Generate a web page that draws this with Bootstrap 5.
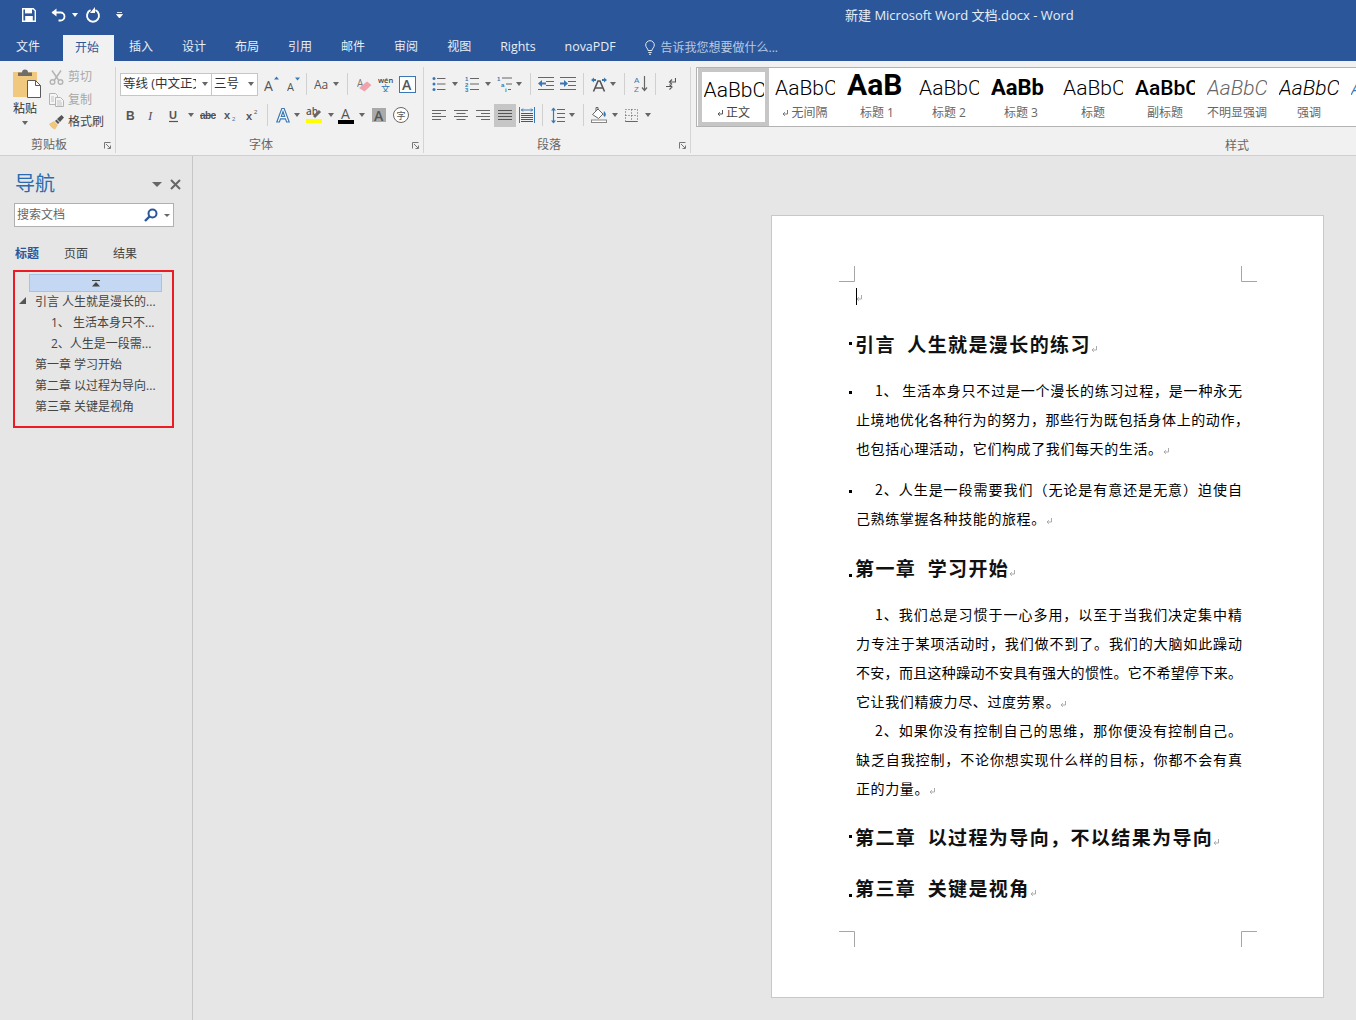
<!DOCTYPE html>
<html lang="zh-CN">
<head>
<meta charset="utf-8">
<title>Word</title>
<link href="https://cdn.jsdelivr.net/npm/bootstrap@5.3.0/dist/css/bootstrap.min.css" rel="stylesheet">
<style>
html,body{height:100%;margin:0}
body{width:1356px;height:1020px;overflow:hidden;background:#e6e6e6;font-family:"Open Sans","Noto Sans CJK SC",sans-serif;font-size:12px;color:#444}
svg{display:block;flex:none}
.s1{margin-left:1px}.s3{margin-left:3px}.s4{margin-left:4px}.s5{margin-left:5px}.s6{margin-left:6px}.s7{margin-left:7px}.s8{margin-left:8px}.s9{margin-left:9px}.s10{margin-left:10px}.s11{margin-left:11px}.s12{margin-left:12px}.s15{margin-left:15px}.s22{margin-left:22px}
.tbar{height:34px;background:#2b579a;color:#e9eef6;padding-bottom:4px}
.wtitle{margin-left:721px;font-size:13px;line-height:30px;white-space:nowrap}
.tabrow{height:27px;background:#2b579a;padding-left:16px}
.tabrow .nav-link{padding:0;margin:0 0 0 29px;color:#e9eef6;font-size:12px;line-height:26px;height:26px;white-space:nowrap}
.tabrow .tfile{margin-left:0;margin-right:1px}
.tabrow .nav-link.tact{background:#f1f1f1;color:#2b579a;padding:0 15px 0 12px;margin:1px -14px 0 22px;height:26px}
.tabrow .nav-link.tlat{font-size:12.4px}
.tabrow .tell{color:#b9c9e2;margin-left:6px}
.tq{margin-left:29px}
.rib{height:95px;background:#f1f1f1;border-bottom:1px solid #cfcfcf}
.grp{flex:none;border-right:1px solid #d4d4d4;margin-top:6px;height:86px;padding-top:5px}
.g1{width:116px}.g2{width:308px;padding-left:4px}.g3{width:267px;padding-left:4px}.g4{flex:1 1 0;min-width:0;border-right:0;padding-left:5px;padding-top:0;overflow:hidden}
.rrow{height:24px;display:flex;align-items:center}
.rrow+.rrow{margin-top:7px}
.glab{height:18px;margin-top:9px;line-height:18px;color:#666;white-space:nowrap;display:flex;align-items:center;padding-right:4px}
.glab.gc{margin-top:2px}
.glab.gy{margin-top:10px}
.lb1{margin-left:31px}.lb2{margin-left:129px}.lb3{margin-left:109px}.lb4{margin-left:529px}
.laun{margin-left:auto}
.tri{flex:none;width:0;height:0;border:3.5px solid transparent;border-top:4px solid #666;border-bottom:0}
.tri.tw{border-top-color:#fff}
.tri.tl{border-width:5px 5px 0;border-top-color:#666}
.tri.ts{border-width:3px 3px 0}
.vs{flex:none;width:1px;height:22px;background:#d0d0d0}
.combo{flex:none;height:23px;background:#fff;border:1px solid #c6c6c6;display:flex;align-items:center;padding-left:2px;color:#333;font-size:12.5px;white-space:nowrap;overflow:hidden}
.cf{width:92px}.cs{width:47px;margin-left:-1px}
.cf span{width:73px;margin-right:5px;overflow:hidden;flex:none}.cs span{width:33px;flex:none}
.pst{width:49px;flex:none;padding-left:13px;margin-top:-3px}
.pst .lbl{color:#333;font-size:12px;line-height:15px;margin-top:2px}
.pst .tri{margin:5px 0 0 9px}
.ccol{margin-top:-3px}
.crow{height:16px;display:flex;align-items:center;gap:4px;margin-bottom:6.5px;line-height:16px;white-space:nowrap}
.off{color:#a8a8a8}
.gal{height:60px;background:#fff;border:1px solid #b3b3b3;border-right:0;overflow:hidden;padding-left:1px}
.sty{flex:none;width:72px;height:58px;text-align:center;overflow:hidden}
.sty.on{border:4px solid #c6c6c6;width:71px;height:58px}
.smp{height:36px;width:60px;margin:0 auto;overflow:hidden;white-space:nowrap;font-family:Roboto,sans-serif;font-size:21px;font-weight:300;color:#000;line-height:40px;text-align:left}
.on .smp{width:60px;height:32px;line-height:36px}
.smp.h1x{font-weight:700;font-size:30px;line-height:34px}
.smp.h3x{font-weight:700;font-size:22px}
.smp.med{font-weight:500}
.smp.itl{font-style:italic;color:#666}
.smp.itd{font-style:italic}
.smp.itb{font-style:italic;color:#3a78b5}
.sl{color:#666;line-height:16px;margin-top:1px;white-space:nowrap;display:flex;align-items:center;justify-content:center;gap:2px}
.on .sl{color:#444}
.main{height:864px}
.navp{width:193px;height:864px;flex:none;border-right:1px solid #c6c6c6;padding-top:14px;background:#e6e6e6}
.ntop{padding-left:15px;height:28px;display:flex;align-items:center}
.ntop b{font-weight:400;font-size:20px;color:#2b6cb0;line-height:26px;width:137px}
.nsearch{margin:5px 0 0 14px;width:160px;height:24px;background:#fff;border:1px solid #b0b0b0;display:flex;align-items:center;padding-left:2px;color:#666}
.nsearch span{width:127px}
.ntabs{margin:15px 0 0 15px;height:24px;line-height:24px}
.ntabs span{width:49px;color:#444}
.ntabs .cur{color:#2b579a;font-weight:700}
.redb{margin:4px 0 0 13px;width:161px;height:158px;border:2px solid #ed1c24;padding-top:2px}
.tbtn{margin-left:14px;margin-bottom:-1px;width:133px;height:18px;background:#c5d8f3;border:1px solid #a8c2e6;display:flex;align-items:center;justify-content:center}
.ti{height:21px;line-height:21px;padding-left:20px;position:relative;white-space:nowrap;color:#444}
.ti.l2{padding-left:36px}
.tarrow{position:absolute;left:4px;top:6px}
.docw{flex:1 1 0;padding:59px 0 0 578px}
.paper{position:relative;width:553px;height:783px;background:#fff;border:1px solid #c8c8c8;padding:65px 0 0 84px;font-family:"Noto Sans CJK SC",sans-serif;color:#000}
.mk{position:absolute}
.mtl{left:67px;top:50px}.mtr{left:469px;top:50px}.mbl{left:67px;top:715px}.mbr{left:469px;top:715px}
.ln{height:29px;line-height:29px;font-size:14px;white-space:nowrap;letter-spacing:.6px}
.jl,.jw{white-space:normal;letter-spacing:0;text-align:justify;text-align-last:justify;width:386px}
.jw{width:393px}
.ind{padding-left:19px}
.hd{height:29px;line-height:29px;font-size:19px;font-weight:700;letter-spacing:1.4px;white-space:nowrap;color:#111;margin-left:-1px}
.mt12{margin-top:12px}.mt18{margin-top:18px}.mt19{margin-top:19px}.mt20{margin-top:20px}.mt22{margin-top:22px}
.dot{display:inline-block;width:3px;height:3px;background:#000;margin-left:-7px;margin-right:4px;vertical-align:middle}
.hd .dot{margin-left:-6px;margin-right:3px}
.dlo{vertical-align:-1px}.dhi{vertical-align:7px}
svg.pm{display:inline-block;vertical-align:-1px;margin-left:0}
svg.pc{margin-left:-1px}
.crt{display:inline-block;width:1px;height:17px;background:#000;vertical-align:-4px}
</style>
</head>
<body>
<div class="tbar d-flex align-items-center">
  <svg class="s22" width="14" height="14" viewBox="0 0 14 14"><path d="M.7.7h10.600l2 2v10.600H.7z" fill="none" stroke="#fff" stroke-width="1.4"/><rect x="3" y="1" width="7" height="4.4" fill="#fff"/><rect x="3.2" y="8" width="7.6" height="5" fill="#fff"/></svg>
  <svg class="s15" width="18" height="14" viewBox="0 0 18 14"><path d="M1.500 4.500h8a4 4 0 0 1 0 8h-2" fill="none" stroke="#fff" stroke-width="1.800"/><path d="M5.500.5v8l-5-4z" fill="#fff"/></svg>
  <div class="tri tw s3"></div>
  <svg class="s7" width="16" height="16" viewBox="0 0 16 16"><path d="M5.600 3.200a6 6 0 1 0 4.800 0" fill="none" stroke="#fff" stroke-width="1.900"/><path d="M10 0v6H5z" fill="#fff"/></svg>
  <svg class="s15" width="8" height="8" viewBox="0 0 8 8"><path d="M1 1.500h5M.5 3.500h6l-3 3.500z" fill="#fff" stroke="#fff" stroke-width=".8"/></svg>
  <div class="wtitle">新建 Microsoft Word 文档.docx - Word</div>
</div>
<ul class="nav tabrow flex-nowrap">
  <li class="nav-item"><a class="nav-link tfile" href="#">文件</a></li>
  <li class="nav-item"><a class="nav-link tact" href="#">开始</a></li>
  <li class="nav-item"><a class="nav-link" href="#">插入</a></li>
  <li class="nav-item"><a class="nav-link" href="#">设计</a></li>
  <li class="nav-item"><a class="nav-link" href="#">布局</a></li>
  <li class="nav-item"><a class="nav-link" href="#">引用</a></li>
  <li class="nav-item"><a class="nav-link" href="#">邮件</a></li>
  <li class="nav-item"><a class="nav-link" href="#">审阅</a></li>
  <li class="nav-item"><a class="nav-link" href="#">视图</a></li>
  <li class="nav-item"><a class="nav-link tlat" href="#">Rights</a></li>
  <li class="nav-item"><a class="nav-link tlat" href="#">novaPDF</a></li>
  <li class="nav-item d-flex align-items-center tq"><svg width="10" height="15" viewBox="0 0 10 15"><path d="M3 10.500C3 8.500.7 7.500.7 5a4.300 4.300 0 0 1 8.600 0c0 2.500-2.300 3.500-2.300 5.500zM3.300 12.500h3.400M4 14.300h2" fill="none" stroke="#dfe7f3" stroke-width="1"/></svg><a class="nav-link tell" href="#">告诉我您想要做什么...</a></li>
</ul>
<div class="rib d-flex">
  <!-- clipboard -->
  <div class="grp g1">
    <div class="d-flex" style="height:62px">
      <div class="pst">
        <svg width="28" height="30" viewBox="0 0 28 30"><rect x="0" y="3" width="24" height="25" fill="#f0c97f"/><path d="M5 7V3.500h4a3 3 0 0 1 6 0h4V7z" fill="#6d6d6d"/><path d="M14.500 11.500h8l5 5v12h-13z" fill="#fff" stroke="#5a5a5a"/><path d="M22.500 11.500v5h5" fill="none" stroke="#5a5a5a"/></svg>
        <div class="lbl">粘贴</div>
        <div class="tri"></div>
      </div>
      <div class="ccol">
        <div class="crow off"><svg width="15" height="15" viewBox="0 0 15 15"><path d="M3 .5l6.500 9.500M12 .5L5.500 10" fill="none" stroke="#b4b4b4" stroke-width="1.500"/><circle cx="3.500" cy="12" r="2.300" fill="none" stroke="#b4b4b4" stroke-width="1.400"/><circle cx="11.500" cy="12" r="2.300" fill="none" stroke="#b4b4b4" stroke-width="1.400"/></svg>剪切</div>
        <div class="crow off"><svg width="15" height="14" viewBox="0 0 15 14"><path d="M.5.500h6l2 2v9h-8z" fill="#f5f5f5" stroke="#b4b4b4"/><path d="M6.500 4.500h5l3 3v6h-8z" fill="#f5f5f5" stroke="#b4b4b4"/><path d="M2 4h3M2 6h3M2 8h3M8 8h4M8 10h5M8 12h5" stroke="#c4c4c4"/></svg>复制</div>
        <div class="crow"><svg width="15" height="15" viewBox="0 0 15 15"><path d="M0 9l5-3 4 4-3 4.500C4 14 1.500 12 0 9z" fill="#efc77e"/><path d="M6 6l1.500-1.500 3 3L9 9zM8 4l4.500-4 2.500 2.500L11 7z" fill="#555"/></svg>格式刷</div>
      </div>
    </div>
    <div class="glab gc"><span class="lb1">剪贴板</span><svg class="laun" width="7" height="7" viewBox="0 0 7 7"><path d="M.5 6.500V.5h6M2 2l4 4M3.500 6.500h3v-3" fill="none" stroke="#777"/></svg></div>
  </div>
  <!-- font -->
  <div class="grp g2">
    <div class="rrow">
      <div class="combo cf"><span>等线 (中文正文)</span><div class="tri s1"></div></div>
      <div class="combo cs"><span>三号</span><div class="tri s1"></div></div>
      <svg class="s6" width="16" height="16" viewBox="0 0 16 16"><text x="0" y="15" font-family="Open Sans" font-size="14" fill="#555">A</text><path d="M10 3.500l2.500-3 2.500 3z" fill="#3a78b5"/></svg>
      <svg class="s7" width="14" height="15" viewBox="0 0 14 15"><text x="0" y="14" font-family="Open Sans" font-size="11" fill="#555">A</text><path d="M8 .5h5l-2.500 3z" fill="#3a78b5"/></svg>
      <div class="vs s5"></div>
      <svg class="s7" width="16" height="14" viewBox="0 0 16 14"><text x="0" y="12" font-family="Open Sans" font-size="12" fill="#555">Aa</text></svg>
      <div class="tri s3"></div>
      <div class="vs s8"></div>
      <svg class="s9" width="15" height="15" viewBox="0 0 15 15"><text x="0" y="10" font-family="Open Sans" font-size="10" fill="#777">A</text><path d="M2 11l8-6.500 4.500 3.500-7 6.500z" fill="#f1a3ad"/></svg>
      <svg class="s6" width="16" height="16" viewBox="0 0 16 16"><text x="0" y="7" font-family="Open Sans" font-size="7.500" fill="#444" font-weight="600">wén</text><text x="3" y="16" font-family="Noto Sans CJK SC" font-size="9" fill="#2e75b6">文</text></svg>
      <svg class="s5" width="17" height="17" viewBox="0 0 17 17"><rect x=".5" y=".5" width="16" height="16" fill="#fff" stroke="#3a78b5"/><text x="3" y="13.500" font-family="Open Sans" font-size="14" font-weight="600" fill="#555">A</text></svg>
    </div>
    <div class="rrow">
      <svg class="s5" width="10" height="14" viewBox="0 0 10 14"><text x="1" y="12" font-family="Liberation Sans" font-size="12" font-weight="700" fill="#555">B</text></svg>
      <svg class="s12" width="10" height="14" viewBox="0 0 10 14"><text x="1" y="12" font-family="Liberation Serif" font-size="13" font-style="italic" fill="#555">I</text></svg>
      <svg class="s11" width="11" height="15" viewBox="0 0 11 15"><text x="1" y="11" font-family="Liberation Sans" font-size="11" font-weight="700" fill="#555">U</text><path d="M1 13.500h9" stroke="#555" stroke-width="1.200"/></svg>
      <div class="tri s9"></div>
      <svg class="s6" width="16" height="14" viewBox="0 0 16 14"><text x="0" y="11" font-family="Liberation Sans" font-size="10" fill="#555" font-weight="700" textLength="16">abc</text><path d="M0 7.500h16" stroke="#555"/></svg>
      <svg class="s8" width="13" height="14" viewBox="0 0 13 14"><text x="0" y="11" font-family="Liberation Sans" font-size="11" font-weight="700" fill="#555">x</text><text x="8" y="13" font-family="Liberation Sans" font-size="6" fill="#3a78b5">2</text></svg>
      <svg class="s9" width="13" height="14" viewBox="0 0 13 14"><text x="0" y="12" font-family="Liberation Sans" font-size="11" font-weight="700" fill="#555">x</text><text x="8" y="6" font-family="Liberation Sans" font-size="6" fill="#555">2</text></svg>
      <div class="vs s8"></div>
      <svg class="s8" width="14" height="16" viewBox="0 0 14 16"><path d="M.8 15L5.800 1.500h2.400L13.200 15h-2.600l-1.100-3.200H4.500L3.400 15zM5.300 9.500h3.400L7 4.500z" fill="#fff" stroke="#3a78b5" stroke-width="1.200"/></svg>
      <div class="tri s4"></div>
      <svg class="s6" width="16" height="18" viewBox="0 0 16 18"><text x="0" y="9" font-family="Open Sans" font-size="10" font-weight="600" fill="#555">ab</text><path d="M8 11l6-6" stroke="#666" stroke-width="3"/><rect y="13" width="16" height="4" fill="#ff0"/></svg>
      <div class="tri s6"></div>
      <svg class="s4" width="16" height="18" viewBox="0 0 16 18"><text x="3" y="13" font-family="Open Sans" font-size="14" fill="#555">A</text><rect y="14" width="16" height="4" fill="#000"/></svg>
      <div class="tri s5"></div>
      <svg class="s7" width="14" height="14" viewBox="0 0 14 14"><rect width="14" height="14" fill="#aaa"/><text x="2" y="12.500" font-family="Open Sans" font-size="14" font-weight="600" fill="#555">A</text></svg>
      <svg class="s7" width="16" height="16" viewBox="0 0 16 16"><circle cx="8" cy="8" r="7.500" fill="#fff" stroke="#666"/><text x="3.500" y="12" font-family="Noto Sans CJK SC" font-size="9" fill="#555">字</text></svg>
    </div>
    <div class="glab"><span class="lb2">字体</span><svg class="laun" width="7" height="7" viewBox="0 0 7 7"><path d="M.5 6.500V.5h6M2 2l4 4M3.500 6.500h3v-3" fill="none" stroke="#777"/></svg></div>
  </div>
  <!-- paragraph -->
  <div class="grp g3">
    <div class="rrow">
      <svg class="s4" width="14" height="14" viewBox="0 0 14 14"><path d="M5 1.500h8.500M5 7h8.500M5 12.500h8.500" stroke="#666"/><circle cx="2" cy="1.500" r="1.500" fill="#3a78b5"/><circle cx="2" cy="7" r="1.500" fill="#3a78b5"/><circle cx="2" cy="12.500" r="1.500" fill="#3a78b5"/></svg>
      <div class="tri s6"></div>
      <svg class="s7" width="14" height="16" viewBox="0 0 14 16"><path d="M5 2.500h9M5 8h9M5 13.500h9" stroke="#666"/><text x="0" y="5" font-family="Liberation Sans" font-size="6" font-weight="700" fill="#3a78b5">1</text><text x="0" y="10.500" font-family="Liberation Sans" font-size="6" font-weight="700" fill="#3a78b5">2</text><text x="0" y="16" font-family="Liberation Sans" font-size="6" font-weight="700" fill="#3a78b5">3</text></svg>
      <div class="tri s6"></div>
      <svg class="s6" width="16" height="16" viewBox="0 0 16 16"><path d="M5 2h10M9 8h6M11 13.500h3" stroke="#666"/><text x="0" y="5" font-family="Liberation Sans" font-size="6" font-weight="700" fill="#3a78b5">1</text><text x="4" y="10.500" font-family="Liberation Sans" font-size="6" font-weight="700" fill="#3a78b5">a</text><text x="8" y="16" font-family="Liberation Sans" font-size="6" font-weight="700" fill="#3a78b5">i</text></svg>
      <div class="tri s3"></div>
      <div class="vs s8"></div>
      <svg class="s7" width="16" height="14" viewBox="0 0 16 14"><path d="M0 .5h16M8 4.500h8M8 8.500h8M0 12.500h16" stroke="#666"/><path d="M0 6.500L4 3v2.500h4v2H4V10z" fill="#3a78b5"/></svg>
      <svg class="s6" width="16" height="14" viewBox="0 0 16 14"><path d="M0 .5h16M8 4.500h8M8 8.500h8M0 12.500h16" stroke="#666"/><path d="M8 6.500L4 3v2.500H0v2h4V10z" fill="#3a78b5"/></svg>
      <div class="vs s7"></div>
      <svg class="s7" width="16" height="15" viewBox="0 0 16 15"><path d="M2.500 14.500L7 4h2l4.500 10.500M4.500 11h7" fill="none" stroke="#555" stroke-width="1.600"/><path d="M0 3l3-2.500v1.500h2v2H3v1.500zM16 3l-3-2.500v1.500h-2v2h2v1.500z" fill="#3a78b5"/></svg>
      <div class="tri s3"></div>
      <div class="vs s8"></div>
      <svg class="s9" width="14" height="16" viewBox="0 0 14 16"><text x="0" y="7" font-family="Liberation Sans" font-size="8" fill="#3a78b5">A</text><text x="0" y="15.500" font-family="Liberation Sans" font-size="8" fill="#8a5db0">Z</text><path d="M10.500 0v14M8 11.500l2.500 3 2.500-3" fill="none" stroke="#666" stroke-width="1.200"/></svg>
      <div class="vs s7"></div>
      <svg class="s10" width="10" height="14" viewBox="0 0 10 14"><path d="M9.500 1v4h-5M6 2.500L3.500 5 6 7.500M0 9.500h5M3.500 7.500L6 10l-2.500 2.500" fill="none" stroke="#555" stroke-width="1.100"/></svg>
    </div>
    <div class="rrow">
      <svg class="s4" width="14" height="11" viewBox="0 0 14 11"><path d="M0 .5h14M0 3.500h9M0 6.500h14M0 9.500h9" stroke="#666"/></svg>
      <svg class="s8" width="14" height="11" viewBox="0 0 14 11"><path d="M0 .5h14M2.500 3.500h9M0 6.500h14M2.500 9.500h9" stroke="#666"/></svg>
      <svg class="s8" width="14" height="11" viewBox="0 0 14 11"><path d="M0 .5h14M5 3.500h9M0 6.500h14M5 9.500h9" stroke="#666"/></svg>
      <svg class="s4" width="22" height="23" viewBox="0 0 22 23"><rect width="22" height="23" fill="#c6c6c6"/><path d="M4 6.500h14M4 9.500h14M4 12.500h14M4 15.500h14" stroke="#555"/></svg>
      <svg class="s3" width="16" height="16" viewBox="0 0 16 16"><path d="M.5 0v16M15.500 0v16" stroke="#3a78b5"/><path d="M2 3h12M4 1.500L2.500 3 4 4.500M12 1.500L13.500 3 12 4.500" fill="none" stroke="#3a78b5"/><path d="M2 6.500h12M2 8.500h12M2 10.500h12M2 12.500h12M2 14.500h12" stroke="#555"/></svg>
      <div class="vs s7"></div>
      <svg class="s8" width="14" height="17" viewBox="0 0 14 17"><path d="M6 2.500h8M6 6.500h8M6 10.500h8M6 14.500h8" stroke="#666"/><path d="M2.500 1v15" stroke="#3a78b5" stroke-width="1.200"/><path d="M0 3.500L2.500.5 5 3.500zM0 13.500h5L2.500 16.500z" fill="#3a78b5"/></svg>
      <div class="tri s4"></div>
      <div class="vs s8"></div>
      <svg class="s7" width="16" height="16" viewBox="0 0 16 16"><path d="M1.500 7.500L7 2l5 5-4.500 4.500z" fill="#fff" stroke="#666"/><path d="M5 4V.5h2V3" fill="none" stroke="#666"/><path d="M13 4c1.500 2 2.500 3 1.500 5s-2.500-.5-2-2z" fill="#3a78b5"/><rect x=".5" y="13" width="15" height="2.500" fill="#fff" stroke="#888"/></svg>
      <div class="tri s5"></div>
      <svg class="s7" width="13" height="13" viewBox="0 0 13 13"><path d="M.5.5h12v12H.5zM6.500.5v12M.5 6.500h12" fill="none" stroke="#555" stroke-dasharray="1 2"/><path d="M.5 12.500h12" stroke="#666"/></svg>
      <div class="tri s7"></div>
    </div>
    <div class="glab"><span class="lb3">段落</span><svg class="laun" width="7" height="7" viewBox="0 0 7 7"><path d="M.5 6.500V.5h6M2 2l4 4M3.500 6.500h3v-3" fill="none" stroke="#777"/></svg></div>
  </div>
  <!-- styles -->
  <div class="grp g4">
    <div class="gal d-flex">
      <div class="sty on"><div class="smp">AaBbC</div><div class="sl"><svg width="7" height="8" viewBox="0 0 7 8"><path d="M5.500 1v4H1M2.800 3.200L1 5l1.800 1.800" fill="none" stroke="#555"/></svg>正文</div></div>
      <div class="sty"><div class="smp">AaBbC</div><div class="sl"><svg width="7" height="8" viewBox="0 0 7 8"><path d="M5.500 1v4H1M2.800 3.200L1 5l1.800 1.800" fill="none" stroke="#777"/></svg>无间隔</div></div>
      <div class="sty"><div class="smp h1x">AaB</div><div class="sl">标题 1</div></div>
      <div class="sty"><div class="smp">AaBbC</div><div class="sl">标题 2</div></div>
      <div class="sty"><div class="smp h3x">AaBb</div><div class="sl">标题 3</div></div>
      <div class="sty"><div class="smp">AaBbC</div><div class="sl">标题</div></div>
      <div class="sty"><div class="smp med">AaBbC</div><div class="sl">副标题</div></div>
      <div class="sty"><div class="smp itl">AaBbC</div><div class="sl">不明显强调</div></div>
      <div class="sty"><div class="smp itd">AaBbC</div><div class="sl">强调</div></div>
      <div class="sty"><div class="smp itb">A</div></div>
    </div>
    <div class="glab gy"><span class="lb4">样式</span></div>
  </div>
</div>
<div class="main d-flex">
  <div class="navp">
    <div class="ntop"><b>导航</b><div class="tri tl"></div><svg class="s8" width="11" height="11" viewBox="0 0 11 11"><path d="M1 1l9 9M10 1l-9 9" stroke="#666" stroke-width="2"/></svg></div>
    <div class="nsearch"><span>搜索文档</span><svg width="14" height="14" viewBox="0 0 14 14"><circle cx="8.500" cy="5.500" r="4" fill="none" stroke="#2b579a" stroke-width="2"/><path d="M5.500 8.500L1 13" stroke="#2b579a" stroke-width="2.400"/></svg><div class="tri ts s6"></div></div>
    <div class="ntabs d-flex"><span class="cur">标题</span><span>页面</span><span>结果</span></div>
    <div class="redb">
      <div class="tbtn"><svg width="8" height="7" viewBox="0 0 8 7"><path d="M0 .5h8" stroke="#444"/><path d="M0 6.500L4 2l4 4.500z" fill="#444"/></svg></div>
      <div class="ti"><svg class="tarrow" width="7" height="7" viewBox="0 0 7 7"><path d="M7 0v7H0z" fill="#555"/></svg>引言 人生就是漫长的...</div>
      <div class="ti l2">1、&nbsp;生活本身只不...</div>
      <div class="ti l2">2、人生是一段需...</div>
      <div class="ti">第一章 学习开始</div>
      <div class="ti">第二章 以过程为导向...</div>
      <div class="ti">第三章 关键是视角</div>
    </div>
  </div>
  <div class="docw">
    <div class="paper">
      <svg class="mk mtl" width="16" height="16" viewBox="0 0 16 16"><path d="M15.500 0v15.500H0" fill="none" stroke="#a6a6a6"/></svg>
      <svg class="mk mtr" width="16" height="16" viewBox="0 0 16 16"><path d="M.5 0v15.500H16" fill="none" stroke="#a6a6a6"/></svg>
      <svg class="mk mbl" width="16" height="16" viewBox="0 0 16 16"><path d="M15.500 16V.5H0" fill="none" stroke="#a6a6a6"/></svg>
      <svg class="mk mbr" width="16" height="16" viewBox="0 0 16 16"><path d="M.5 16V.5H16" fill="none" stroke="#a6a6a6"/></svg>

      <div class="ln"><span class="crt"></span><svg class="pm pc" width="7" height="8" viewBox="0 0 7 8"><path d="M5.500 1v4H1M2.800 3.200L1 5l1.800 1.800" fill="none" stroke="#aaa"/></svg></div>
      <div class="hd mt19"><span class="dot dhi"></span>引言&nbsp;&nbsp;人生就是漫长的练习<svg class="pm" width="7" height="8" viewBox="0 0 7 8"><path d="M5.500 1v4H1M2.800 3.200L1 5l1.800 1.800" fill="none" stroke="#aaa"/></svg></div>
      <div class="ln mt18 jl"><span class="dot"></span><span class="ind"></span>1、 生活本身只不过是一个漫长的练习过程，是一种永无</div>
      <div class="ln jw">止境地优化各种行为的努力，那些行为既包括身体上的动作，</div>
      <div class="ln">也包括心理活动，它们构成了我们每天的生活。<svg class="pm" width="7" height="8" viewBox="0 0 7 8"><path d="M5.500 1v4H1M2.800 3.200L1 5l1.800 1.800" fill="none" stroke="#aaa"/></svg></div>
      <div class="ln mt12 jl"><span class="dot"></span><span class="ind"></span>2、人生是一段需要我们（无论是有意还是无意）迫使自</div>
      <div class="ln">己熟练掌握各种技能的旅程。<svg class="pm" width="7" height="8" viewBox="0 0 7 8"><path d="M5.500 1v4H1M2.800 3.200L1 5l1.800 1.800" fill="none" stroke="#aaa"/></svg></div>
      <div class="hd mt20"><span class="dot dlo"></span>第一章&nbsp;&nbsp;学习开始<svg class="pm" width="7" height="8" viewBox="0 0 7 8"><path d="M5.500 1v4H1M2.800 3.200L1 5l1.800 1.800" fill="none" stroke="#aaa"/></svg></div>
      <div class="ln mt18 jl"><span class="ind"></span>1、我们总是习惯于一心多用，以至于当我们决定集中精</div>
      <div class="ln jl">力专注于某项活动时，我们做不到了。我们的大脑如此躁动</div>
      <div class="ln jl">不安，而且这种躁动不安具有强大的惯性。它不希望停下来。</div>
      <div class="ln">它让我们精疲力尽、过度劳累。<svg class="pm" width="7" height="8" viewBox="0 0 7 8"><path d="M5.500 1v4H1M2.800 3.200L1 5l1.800 1.800" fill="none" stroke="#aaa"/></svg></div>
      <div class="ln jl"><span class="ind"></span>2、如果你没有控制自己的思维，那你便没有控制自己。</div>
      <div class="ln jl">缺乏自我控制，不论你想实现什么样的目标，你都不会有真</div>
      <div class="ln">正的力量。<svg class="pm" width="7" height="8" viewBox="0 0 7 8"><path d="M5.500 1v4H1M2.800 3.200L1 5l1.800 1.800" fill="none" stroke="#aaa"/></svg></div>
      <div class="hd mt19"><span class="dot dhi"></span>第二章&nbsp;&nbsp;以过程为导向，不以结果为导向<svg class="pm" width="7" height="8" viewBox="0 0 7 8"><path d="M5.500 1v4H1M2.800 3.200L1 5l1.800 1.800" fill="none" stroke="#aaa"/></svg></div>
      <div class="hd mt22"><span class="dot dlo"></span>第三章&nbsp;&nbsp;关键是视角<svg class="pm" width="7" height="8" viewBox="0 0 7 8"><path d="M5.500 1v4H1M2.800 3.200L1 5l1.800 1.800" fill="none" stroke="#aaa"/></svg></div>
    </div>
  </div>
</div>
<script src="https://cdn.jsdelivr.net/npm/bootstrap@5.3.0/dist/js/bootstrap.bundle.min.js"></script>
</body>
</html>
